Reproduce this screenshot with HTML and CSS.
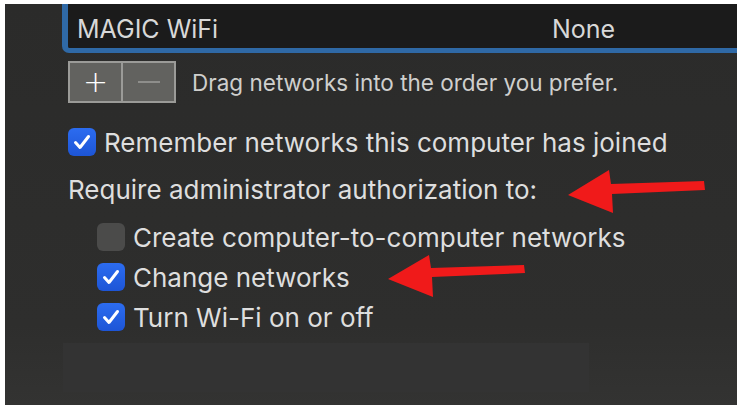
FILE: index.html
```html
<!DOCTYPE html>
<html lang="en">
<head>
    <meta charset="utf-8">
    <title>Wi-Fi Advanced</title>
    <link rel="stylesheet" href="styles.css">
</head>
<body>
    <div class="pane">
        <!-- network list (scrolled to the last row) -->
        <div class="network-list">
            <div class="network-row">
                <span class="network-name">MAGIC WiFi</span>
                <span class="network-security">None</span>
            </div>
        </div>

        <div class="list-tools">
            <div class="btn-group">
                <button class="tool-btn plus">+</button>
                <button class="tool-btn minus"><span class="minus-bar"></span></button>
            </div>
            <span class="hint">Drag networks into the order you prefer.</span>
        </div>

        <div class="options">
            <label class="check-row">
                <span class="box checked">
                    <svg viewBox="0 0 28 28"><path d="M7.5 14.5 L12 19.5 L20.5 8.5" /></svg>
                </span>
                Remember networks this computer has joined
            </label>
            <div class="section-label">Require administrator authorization to:</div>
            <div class="sub-options">
                <label class="check-row">
                    <span class="box"></span>
                    Create computer-to-computer networks
                </label>
                <label class="check-row">
                    <span class="box checked">
                        <svg viewBox="0 0 28 28"><path d="M7.5 14.5 L12 19.5 L20.5 8.5" /></svg>
                    </span>
                    Change networks
                </label>
                <label class="check-row">
                    <span class="box checked">
                        <svg viewBox="0 0 28 28"><path d="M7.5 14.5 L12 19.5 L20.5 8.5" /></svg>
                    </span>
                    Turn Wi-Fi on or off
                </label>
            </div>
        </div>

        <div class="footer-shade"></div>

        <!-- annotation arrows drawn over the screenshot -->
        <svg class="annotations" width="732" height="401" viewBox="0 0 732 401">
            <g fill="#f01a1a">
                <polygon points="563,191 604,166 606,180 699,177 700,186 607,190 608,209" />
                <polygon points="383,275 424,251 426,264 519,261 520,269 427,273 428,293" />
            </g>
        </svg>
    </div>
</body>
</html>
```

FILE: styles.css
```css
body {
    background-color: #ffffff;
    margin: 0;
    overflow: hidden;
    font-family: Inter, "Liberation Sans", sans-serif;
}

.pane {
    position: relative;
    margin: 4px 5px 0 5px;
    width: 732px;
    height: 401px;
    background: linear-gradient(#2b2b2a, #2e2e2d 80%, #333332);
    overflow: hidden;
}

.network-list {
    margin-left: 57px;
    margin-top: -10px;
    border-left: 6px solid #2f69a6;
    border-bottom: 5px solid #2f69a6;
    border-bottom-left-radius: 7px;
    background: #1b1b1b;
}

.network-row {
    display: flex;
    height: 54px;
    align-items: flex-end;
    padding-bottom: 4px;
    box-sizing: border-box;
    font-size: 25px;
    color: #d8d8d8;
}

.network-name {
    margin-left: 9px;
    width: 475px;
}

.list-tools {
    display: flex;
    align-items: center;
    margin: 8px 0 0 63px;
    gap: 16px;
}

.btn-group {
    display: flex;
    border: 2px solid #9b9b98;
    background: #9b9b98;
    gap: 2px;
}

.tool-btn {
    width: 51px;
    height: 38px;
    border: none;
    padding: 0;
    background: #62625f;
    color: #ffffff;
    font-family: "DejaVu Sans", sans-serif;
    font-size: 30px;
    font-weight: 200;
    line-height: 38px;
    display: flex;
    align-items: center;
    justify-content: center;
}

.minus-bar {
    width: 22px;
    height: 2px;
    background: #8e8e8b;
}

.hint {
    font-size: 22.5px;
    color: #cfcfcd;
}

.options {
    margin: 19px 0 0 63px;
    font-size: 26px;
    color: #dedede;
}

.check-row {
    display: flex;
    align-items: center;
    gap: 8px;
    height: 40px;
}

.section-label {
    height: 55px;
    display: flex;
    align-items: center;
}

.sub-options {
    margin-left: 29px;
}

.box {
    width: 28px;
    height: 28px;
    border-radius: 6px;
    background: #4b4b4a;
    flex-shrink: 0;
}

.box.checked {
    background: linear-gradient(#2c6cf0, #1d55d6);
}

.box svg {
    width: 28px;
    height: 28px;
    display: block;
}

.box svg path {
    fill: none;
    stroke: #ffffff;
    stroke-width: 3;
    stroke-linecap: round;
    stroke-linejoin: round;
}

.footer-shade {
    position: absolute;
    left: 58px;
    top: 339px;
    width: 526px;
    height: 49px;
    background: #333333;
}

.annotations {
    position: absolute;
    left: 0;
    top: 0;
}
```
